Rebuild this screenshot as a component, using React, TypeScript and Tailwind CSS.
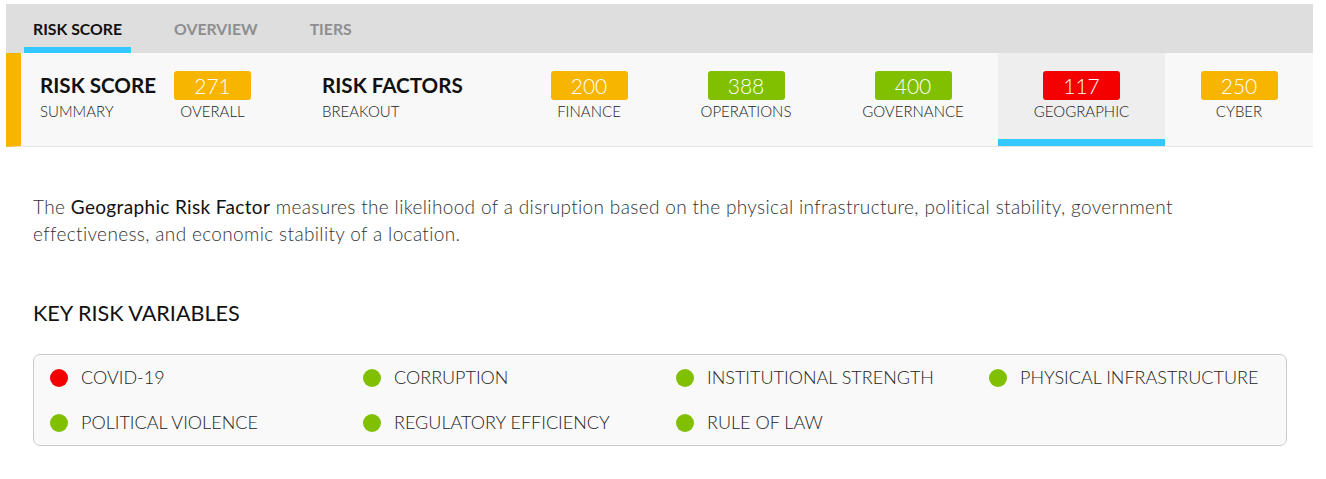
import React from "react";

const factors = [
  { score: 200, label: "FINANCE", color: "bg-[#f7b500]", w: "w-[150px]", active: false },
  { score: 388, label: "OPERATIONS", color: "bg-[#80c000]", w: "w-[164px]", active: false },
  { score: 400, label: "GOVERNANCE", color: "bg-[#80c000]", w: "w-[170px]", active: false },
  { score: 117, label: "GEOGRAPHIC", color: "bg-[#f50000]", w: "w-[167px]", active: true },
  { score: 250, label: "CYBER", color: "bg-[#f7b500]", w: "w-[148px]", active: false },
];

const vars = [
  { name: "COVID-19", red: true },
  { name: "CORRUPTION" },
  { name: "INSTITUTIONAL STRENGTH" },
  { name: "PHYSICAL INFRASTRUCTURE" },
  { name: "POLITICAL VIOLENCE" },
  { name: "REGULATORY EFFICIENCY" },
  { name: "RULE OF LAW" },
];

function Badge({ score, color }: { score: number; color: string }) {
  return (
    <div
      className={`${color} w-[77px] h-[29px] rounded-[3px] text-white text-[21px] font-light leading-[29px] text-center`}
    >
      {score}
    </div>
  );
}

export default function App() {
  return (
    <div className="w-[1326px] h-[479px] bg-white font-['Lato',sans-serif] text-[#222]">
      <div className="pt-[4px] ml-[6px] w-[1307px]">
        {/* Tabs */}
        <div className="h-[49px] bg-[#dedede] flex pl-[18px] gap-[34px]">
          <div className="h-[49px] pt-[6px] border-b-[6px] border-[#33c8ff] px-[9px] flex items-center text-[15.8px] font-bold text-[#111]">
            RISK SCORE
          </div>
          <div className="h-[49px] pt-[6px] border-b-[6px] border-transparent px-[9px] flex items-center text-[15.8px] font-bold text-[#8e8e8e]">
            OVERVIEW
          </div>
          <div className="h-[49px] pt-[6px] border-b-[6px] border-transparent px-[9px] flex items-center text-[15.8px] font-bold text-[#8e8e8e]">
            TIERS
          </div>
        </div>

        {/* Score bar */}
        <div className="h-[94px] bg-[#f8f8f8] border-l-[15px] border-l-[#f7b500] border-b border-b-[#e5e5e5] flex">
          <div className="flex w-[493px] pl-[19px]">
            <div className="w-[134px] pt-[19px] flex flex-col">
              <div className="text-[20.6px] font-bold leading-[26px] text-[#111] whitespace-nowrap">RISK SCORE</div>
              <div className="text-[15px] font-light leading-[26px] whitespace-nowrap">SUMMARY</div>
            </div>
            <div className="w-[77px] pt-[18px] flex flex-col items-center">
              <Badge score={271} color="bg-[#f7b500]" />
              <div className="text-[15px] font-light leading-[22px] whitespace-nowrap">OVERALL</div>
            </div>
            <div className="ml-[71px] pt-[19px] flex flex-col">
              <div className="text-[20.6px] font-bold leading-[26px] text-[#111] whitespace-nowrap">RISK FACTORS</div>
              <div className="text-[15px] font-light leading-[26px] whitespace-nowrap">BREAKOUT</div>
            </div>
          </div>
          {factors.map((f) => (
            <div
              key={f.label}
              className={`${f.w} h-[93px] pt-[18px] flex flex-col items-center ${
                f.active ? "bg-[#eeeeee] border-b-[7px] border-b-[#33c8ff]" : ""
              }`}
            >
              <Badge score={f.score} color={f.color} />
              <div className="text-[15px] font-light leading-[22px] whitespace-nowrap">{f.label}</div>
            </div>
          ))}
        </div>
      </div>

      {/* Description */}
      <div className="pl-[33px] pr-[20px]">
        <p className="mt-[46px] text-[19px] tracking-[0.35px] font-light leading-[27px] text-[#333] whitespace-nowrap">
          The <span className="font-normal text-[#111]">Geographic Risk Factor</span> measures the likelihood of a
          disruption based on the physical infrastructure, political stability, government
          <br />
          effectiveness, and economic stability of a location.
        </p>

        <h2 className="mt-[52px] text-[21.6px] font-normal leading-[28px] text-[#111]">KEY RISK VARIABLES</h2>

        <div className="mt-[27px] w-[1254px] border border-[#cccccc] rounded-[7px] bg-[#f9f9f9] px-[16px] grid grid-cols-[313px_313px_313px_1fr]">
          {vars.map((v) => (
            <div key={v.name} className="h-[45px] flex items-center gap-[13px]">
              <span
                className={`w-[18px] h-[18px] rounded-full shrink-0 ${v.red ? "bg-[#f50000]" : "bg-[#80c000]"}`}
              />
              <span className="text-[18px] font-light text-[#222] whitespace-nowrap">{v.name}</span>
            </div>
          ))}
        </div>
      </div>
    </div>
  );
}
